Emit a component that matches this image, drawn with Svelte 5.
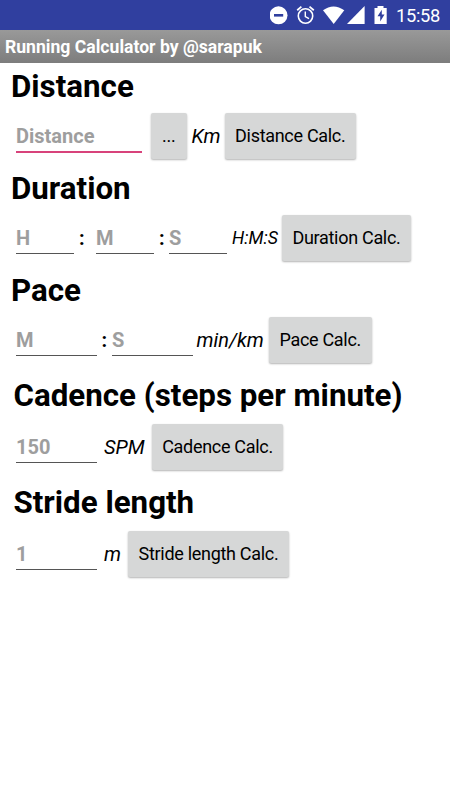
<script>
  const field = (hint, width, gap = 0, focused = false) => ({ kind: 'field', text: hint, width, gap, focused });
  const unit = (text, width, gap, size = 20) => ({ kind: 'unit', text, width, gap, size });
  const colon = (gap, width = 6) => ({ kind: 'colon', text: ':', width, gap });
  const button = (text, width, gap) => ({ kind: 'button', text, width, gap });

  const sections = [
    { title: 'Distance', items: [field('Distance', 126, 0, true), button('...', 36.5, 8.5), unit('Km', 28, 4.5), button('Distance Calc.', 131.5, 5)] },
    { title: 'Duration', items: [field('H', 58), colon(5), field('M', 58, 11), colon(5), field('S', 58, 4), unit('H:M:S', 46, 5, 17.7), button('Duration Calc.', 129, 4)] },
    { title: 'Pace', items: [field('M', 81), colon(4.5), field('S', 80.5, 4.5), unit('min/km', 68, 4), button('Pace Calc.', 102.5, 4.5)] },
    { title: 'Cadence (steps per minute)', roomy: true, items: [field('150', 81), unit('SPM', 41, 7), button('Cadence Calc.', 131, 7)] },
    { title: 'Stride length', roomy: true, items: [field('1', 81), unit('m', 17, 7), button('Stride length Calc.', 161, 7)] }
  ];
</script>

<div class="screen">
  <div class="status">
    <svg width="130" height="30" viewBox="0 0 130 30" fill="#fff">
      <circle cx="8.5" cy="15.3" r="9" />
      <path d="M4 14h9.2v2.6H4z" fill="#303f9f" />
      <g fill="none" stroke="#fff" stroke-width="1.6">
        <circle cx="35.5" cy="16" r="7.2" />
        <path d="M35.3 11.5v5l3.7 2.2" stroke-width="1.4" />
        <path d="M27.2 10.2l4.2-3.6M39.5 6.6l4.3 3.6" stroke-width="1.8" />
      </g>
      <path d="M53 10.3Q63.5 2.6 74.3 10.3L63.7 24z" />
      <path d="M94.6 6v18H77z" />
      <path d="M104.5 8h3V6h6v2h3.2v16h-12.2z" />
      <path d="M111.8 9.7l-4.3 6.5h2.7v5.2l4.3-7h-2.7z" fill="#303f9f" />
    </svg>
    <span class="clock">15:58</span>
  </div>
  <header><span>Running Calculator by @sarapuk</span></header>
  <main>
    {#each sections as section}
      <section class:roomy={section.roomy}>
        <h2>{section.title}</h2>
        <div class="row">
          {#each section.items as item}
            {#if item.kind === 'field'}
              <input class:focused={item.focused} placeholder={item.text} aria-label={item.text} style="width:{item.width}px;margin-left:{item.gap}px" />
            {:else if item.kind === 'button'}
              <button style="width:{item.width}px;margin-left:{item.gap}px">{item.text}</button>
            {:else}
              <span class={item.kind} style="width:{item.width}px;margin-left:{item.gap}px;{item.size ? `font-size:${item.size}px` : ''}">{item.text}</span>
            {/if}
          {/each}
        </div>
      </section>
    {/each}
  </main>
</div>

<style>
  :global(body) { margin: 0; background: #fff; }
  .screen {
    width: 450px;
    height: 800px;
    overflow: hidden;
    background: #fff;
    color: #000;
    font-family: Roboto, sans-serif;
  }
  .status {
    display: flex;
    align-items: center;
    height: 30px;
    padding-left: 270px;
    background: #303f9f;
    color: #fff;
  }
  .status svg { flex: none; }
  .clock { margin-left: -4px; padding-top: 2px; font-size: 18.3px; letter-spacing: -.3px; line-height: 28px; white-space: nowrap; }
  header {
    height: 33px;
    padding-left: 5px;
    box-sizing: border-box;
    background: linear-gradient(#999, #7d7d7d);
    color: #fff;
    font-size: 17.6px;
    font-weight: 700;
    line-height: 34px;
    white-space: nowrap;
  }
  section { height: 102px; }
  section.roomy { height: 107px; }
  h2 {
    margin: 0;
    height: 50px;
    padding-left: 11px;
    font-size: 31.3px;
    font-weight: 700;
    line-height: 48px;
    white-space: nowrap;
  }
  .roomy h2 { height: 55px; padding-left: 13.5px; line-height: 53px; }
  .row { display: flex; height: 46px; padding-left: 16px; }
  .row > * { flex: none; box-sizing: border-box; white-space: nowrap; line-height: 46px; }
  input {
    height: 39px;
    padding: 8px 0 0;
    border: 0;
    border-bottom: 1px solid #555;
    border-radius: 0;
    outline: 0;
    background: transparent;
    font: 700 20px Roboto, sans-serif;
  }
  .row > input { line-height: 30px; }
  input::placeholder { color: #9e9e9e; opacity: 1; }
  input.focused { height: 40px; border-bottom: 2px solid #d8437b; }
  .colon { font-size: 20px; font-weight: 700; }
  .unit { font-style: italic; }
  button {
    height: 46px;
    padding: 0;
    border: 0;
    border-radius: 2px;
    background: #d6d7d7;
    box-shadow: 0 1px 2px rgba(0, 0, 0, .3);
    color: #000;
    font: 400 18px Roboto, sans-serif;
    letter-spacing: -.3px;
  }
</style>
